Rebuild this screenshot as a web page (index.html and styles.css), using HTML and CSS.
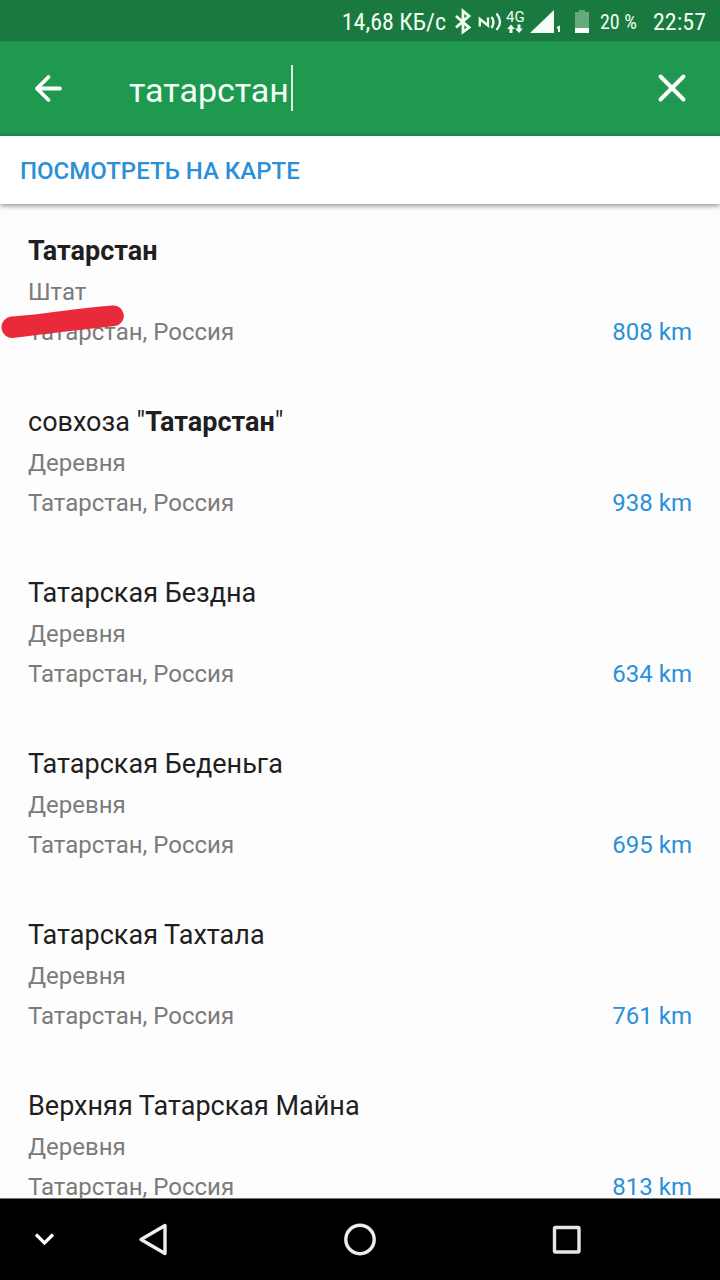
FILE: index.html
```html
<!DOCTYPE html>
<html lang="ru">
<head>
<meta charset="utf-8">
<meta name="viewport" content="width=device-width, initial-scale=1">
<title>Поиск</title>
<link rel="stylesheet" href="styles.css">
</head>
<body>
<div class="status">
  <span class="status-speed">14,68 КБ/с</span>
  <svg class="status-icons" width="134" height="30" viewBox="454 6 134 30" aria-hidden="true">
    <path d="M456 15L469 26.500L463 31V10L469 15L456 26.500" fill="none" stroke="#f0fff0" stroke-width="2.800"/>
    <path d="M479.800 25.500V18L488 24.500V16.500M491.500 16Q495.500 21 491.500 27M496.500 12.500Q503.500 21 496.500 29" fill="none" stroke="#f0fff0" stroke-width="2.300"/>
    <text class="status-net" x="506" y="21">4G</text>
    <path d="M511 23.500L515 28H512.500V32H509.500V28H507ZM519 32L515 27.500H517.500V23.500H520.500V27.500H523Z" fill="#f0fff0"/>
    <path d="M530 32L554 9V32Z" fill="#f8fff8"/>
    <path d="M557 27L559 26V31" fill="none" stroke="#f0fff0" stroke-width="2"/>
    <path d="M575 11H579V9H585V11H589V32H575Z" fill="#66a97b"/>
    <path d="M575 27H589V32H575Z" fill="#fff"/>
  </svg>
  <span class="status-battery">20 %</span>
  <time class="status-time">22:57</time>
</div>
<header class="appbar">
  <button class="icon-button" type="button" aria-label="Назад">
    <svg width="32" height="32" viewBox="0 0 32 32"><path d="M28 16.500H5M16.500 5L5 16.500L16.500 28" fill="none" stroke="#fff" stroke-width="3.800" stroke-linecap="round" stroke-linejoin="round"/></svg>
  </button>
  <div class="search">
    <input class="search-input" type="text" value="татарстан" aria-label="Поиск">
    <span class="caret"></span>
  </div>
  <button class="icon-button" type="button" aria-label="Очистить">
    <svg width="32" height="32" viewBox="0 0 32 32"><path d="M4.500 4.500L27.500 27.500M27.500 4.500L4.500 27.500" fill="none" stroke="#fff" stroke-width="4" stroke-linecap="round"/></svg>
  </button>
</header>
<div class="mapbar"><button class="map-button" type="button">ПОСМОТРЕТЬ НА КАРТЕ</button></div>
<main class="results">
  <article class="result">
    <h2 class="result-title"><b>Татарстан</b></h2>
    <p class="result-type">Штат</p>
    <p class="result-place"><span>Татарстан, Россия</span><span class="distance">808 km</span></p>
    <svg class="marker" width="124" height="36" viewBox="0 0 124 36" aria-hidden="true"><path d="M11 12.500Q28 11.500 62 7Q90 3 112 1.500A10.300 10.300 0 0 1 115 22Q60 28 13 34A10.800 10.800 0 0 1 11 12.500Z" fill="#e92a3b"/></svg>
  </article>
  <article class="result">
    <h2 class="result-title">совхоза "<b>Татарстан</b>"</h2>
    <p class="result-type">Деревня</p>
    <p class="result-place"><span>Татарстан, Россия</span><span class="distance">938 km</span></p>
  </article>
  <article class="result">
    <h2 class="result-title">Татарская Бездна</h2>
    <p class="result-type">Деревня</p>
    <p class="result-place"><span>Татарстан, Россия</span><span class="distance">634 km</span></p>
  </article>
  <article class="result">
    <h2 class="result-title">Татарская Беденьга</h2>
    <p class="result-type">Деревня</p>
    <p class="result-place"><span>Татарстан, Россия</span><span class="distance">695 km</span></p>
  </article>
  <article class="result">
    <h2 class="result-title">Татарская Тахтала</h2>
    <p class="result-type">Деревня</p>
    <p class="result-place"><span>Татарстан, Россия</span><span class="distance">761 km</span></p>
  </article>
  <article class="result">
    <h2 class="result-title">Верхняя Татарская Майна</h2>
    <p class="result-type">Деревня</p>
    <p class="result-place"><span>Татарстан, Россия</span><span class="distance">813 km</span></p>
  </article>
</main>
<nav class="navbar">
  <button class="nav-button nav-hide" type="button" aria-label="Скрыть панель">
    <svg width="24" height="24" viewBox="0 0 24 24"><path d="M4 6.500L12.500 15L21 6.500" fill="none" stroke="#fff" stroke-width="3.200"/></svg>
  </button>
  <div class="nav-main">
    <button class="nav-button" type="button" aria-label="Назад">
      <svg width="36" height="36" viewBox="0 0 36 36"><path d="M30 3.500V31.500L6 17.500Z" fill="none" stroke="#eee" stroke-width="3.400" stroke-linejoin="round"/></svg>
    </button>
    <button class="nav-button" type="button" aria-label="Домой">
      <svg width="36" height="36" viewBox="0 0 36 36"><circle cx="18" cy="17.500" r="14.200" fill="none" stroke="#eee" stroke-width="3.400"/></svg>
    </button>
    <button class="nav-button" type="button" aria-label="Недавние">
      <svg width="36" height="36" viewBox="0 0 36 36"><rect x="5.500" y="5.500" width="24.500" height="24.500" rx="1" fill="none" stroke="#e6e6e6" stroke-width="3.400"/></svg>
    </button>
  </div>
</nav>
</body>
</html>
```
FILE: styles.css
```css
* {
  box-sizing: border-box;
}

body {
  margin: 0;
  height: 100vh;
  display: flex;
  flex-direction: column;
  overflow: hidden;
  background: #fdfdfd;
  color: #1f1f1f;
  font-family: Roboto, "Noto Sans", sans-serif;
}

button {
  border: 0;
  padding: 0;
  background: none;
  font: inherit;
}

svg {
  display: block;
}

.status {
  flex: none;
  height: 41px;
  padding: 2px 14px 0 0;
  display: flex;
  align-items: center;
  justify-content: flex-end;
  background: #1a793f;
  color: #f0fff0;
  font-family: "Roboto Condensed", Roboto, sans-serif;
  font-size: 24px;
}

.status-speed {
  margin-right: 8px;
}

.status-icons {
  overflow: visible;
}

.status-net {
  font-size: 15px;
  font-family: Roboto, sans-serif;
  fill: #f0fff0;
}

.status-battery {
  margin: 0 16px 0 12px;
  font-size: 20px;
}

.appbar {
  flex: none;
  height: 95px;
  padding: 0 16px;
  display: flex;
  align-items: center;
  background: #1e994f;
  border-top: 1px solid #1b8847;
  border-bottom: 3px solid #1f8e4a;
}

.icon-button {
  flex: none;
  width: 64px;
  height: 64px;
  display: grid;
  place-items: center;
}

.search {
  flex: 1;
  min-width: 0;
  margin-left: 49px;
  display: flex;
  align-items: center;
}

.search-input {
  width: 162px;
  height: 46px;
  padding: 4px 0 0;
  border: 0;
  outline: 0;
  background: none;
  color: #f4fff6;
  font: 34px Roboto, "Noto Sans", sans-serif;
}

.caret {
  width: 2px;
  height: 46px;
  background: #d8f3e0;
}

.mapbar {
  flex: none;
  height: 68px;
  padding: 2px 20px 0;
  display: flex;
  align-items: center;
  background: #fff;
  box-shadow: 0 2px 5px rgba(0, 0, 0, 0.4);
}

.map-button {
  color: #2b90d9;
  font-size: 24px;
  font-weight: 500;
}

.results {
  flex: 1;
  min-height: 0;
  padding: 26px 28px 0;
  overflow: hidden;
}

.result {
  position: relative;
  margin-bottom: 50px;
}

.result-title {
  margin: 0;
  font-size: 27px;
  font-weight: 400;
  line-height: 42px;
}

.result-type,
.result-place {
  margin: 0;
  color: #7b7b7b;
  font-size: 24px;
}

.result-type {
  line-height: 41px;
}

.result-place {
  display: flex;
  justify-content: space-between;
  line-height: 38px;
}

.distance {
  color: #2b90d9;
}

.marker {
  position: absolute;
  left: -28px;
  top: 74px;
}

.navbar {
  position: relative;
  flex: none;
  height: 82px;
  display: flex;
  align-items: center;
  background: #000;
  border-top: 1px solid #777;
}

.nav-main {
  flex: 1;
  padding: 0 50px;
  display: flex;
  justify-content: space-around;
}

.nav-button {
  display: grid;
  place-items: center;
}

.nav-hide {
  position: absolute;
  left: 32px;
}
```
